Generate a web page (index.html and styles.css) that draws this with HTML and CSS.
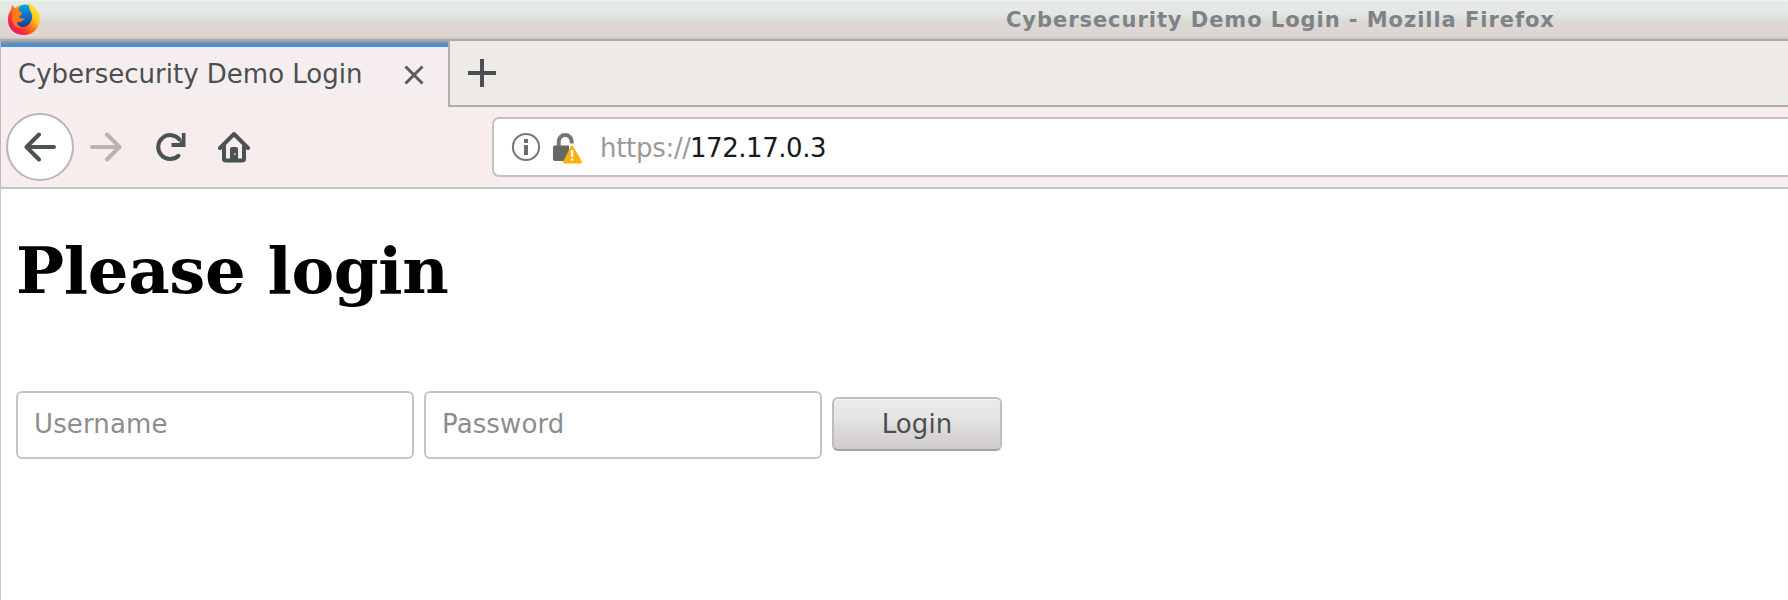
FILE: index.html
```html
<!DOCTYPE html>
<html lang="en">
<head>
<meta charset="utf-8">
<title>Cybersecurity Demo Login</title>
<link rel="stylesheet" href="styles.css">
</head>
<body>
<div class="window">
  <header class="titlebar">
    <svg class="logo" viewBox="0 0 34 34">
      <defs>
        <linearGradient id="flame" x1="0.9" y1="0.1" x2="0.1" y2="0.9">
          <stop offset="0" stop-color="#ffee3c"/><stop offset=".3" stop-color="#ffc522"/><stop offset=".55" stop-color="#ff6a1c"/><stop offset=".8" stop-color="#f9273f"/><stop offset="1" stop-color="#e5137c"/>
        </linearGradient>
        <linearGradient id="globe" x1="0" y1="0" x2="0" y2="1">
          <stop offset="0" stop-color="#08a6e8"/><stop offset="1" stop-color="#173a9b"/>
        </linearGradient>
      </defs>
      <path fill="url(#flame)" d="M5 3l3 3 5-3 8 0 1-3 3 4c6 3 8 8 8 13 0 9-7 16-16 16S1 27 1 18C1 13 2 10 4 8z"/>
      <path fill="url(#globe)" d="M13 4c4-2 7-2 9 0 0 5 4 7 3 12-1 6-5 9-10 9-4 0-6-2-5-5 4 1 5-1 8-3-2-1-5 0-7-2l4-4-4-3z"/>
      <path fill="#ff7a1a" d="M6 9c4-1 6 1 9 3l-3 3 3 3-5 2c0 3 3 5 6 5-7 3-11-3-11-8z"/>
    </svg>
    <div class="window-title">Cybersecurity Demo Login - Mozilla Firefox</div>
  </header>
  <div class="tabs">
    <div class="tab">
      <span class="tab-label">Cybersecurity Demo Login</span>
      <svg class="close" viewBox="0 0 20 20"><path d="M1.500 1.500l17 17M18.500 1.500l-17 17"/></svg>
    </div>
    <div class="strip"><svg class="plus" viewBox="0 0 28 28"><path d="M14 0v28M0 14h28"/></svg></div>
  </div>
  <nav class="toolbar">
    <div class="back"><svg viewBox="0 0 32 32"><path d="M30 16H3M15 3.500L2.500 16 15 28.500"/></svg></div>
    <svg class="forward" viewBox="0 0 32 32"><path d="M2 16h27M17 3.500L29.500 16 17 28.500"/></svg>
    <svg class="reload" viewBox="0 0 32 32"><path class="arc" d="M23.500 24.800A12 12 0 1 1 24.500 8.500"/><path class="head" d="M30.500 2v14H16.500v-4h7.500l2.800-3V2z"/></svg>
    <svg class="home" viewBox="0 0 32 32"><path class="house" d="M2 17L16 3l14 14M6 15v13q0 1.500 2 1.500h16q2 0 2-1.500V15"/><path class="door" d="M12 30V18q0-2 2-2h4q2 0 2 2v12z"/><circle class="knob" cx="16.800" cy="23" r="1"/></svg>
    <div class="urlbar">
      <svg class="info" viewBox="0 0 30 30"><circle cx="15" cy="15" r="13.100"/><path class="i" d="M13 7h4v4h-4zM13 13h4v10h-4z"/></svg>
      <svg class="lock" viewBox="0 0 30 32"><path class="shackle" d="M6.700 15V9.500a6.500 6.500 0 0 1 13 0V11.500"/><path class="case" d="M1 15q0-1.500 1.500-1.500H17V29H3q-2 0-2-2z"/><path class="warn" d="M18.700 14.500q1.300-2 2.600 0l8.500 15q.7 2-1.300 2H12.500q-2 0-1.300-2z"/><path class="mark" d="M18.900 18h2.400v7h-2.400zM18.900 26.600h2.400v2.200h-2.400z"/></svg>
      <span class="scheme">https://</span><span class="host">172.17.0.3</span>
    </div>
  </nav>
  <main class="page">
    <h1 class="heading">Please login</h1>
    <form class="login">
      <input class="field user" type="text" placeholder="Username">
      <input class="field pass" type="password" placeholder="Password">
      <button class="submit" type="button">Login</button>
    </form>
  </main>
</div>
</body>
</html>
```
FILE: styles.css
```css
* { box-sizing: border-box; }
body { margin: 0; background: #fff; font-family: "DejaVu Sans", sans-serif; font-size: 26px; color: #4a5052; overflow: hidden; }
svg { display: block; flex: none; }
.window { width: 1788px; height: 600px; display: flex; flex-direction: column; }
.titlebar { height: 41px; flex: none; display: flex; align-items: flex-start; border-bottom: 2px solid #aaa; background: linear-gradient(#f2f7f1 0, #e5ebe4 2px, #e5e6e6 14px, #dadad5 21px, #ded6d3 30px, #ded6d3 36px, #c8c6c5 39px); }
.logo { width: 34px; height: 34px; margin: 2px 0 0 7px; }
.window-title { margin: 6px 0 0 965px; font: bold 21px/28px "DejaVu Sans", sans-serif; letter-spacing: .95px; color: #808385; white-space: nowrap; }
.tabs { height: 66px; flex: none; display: flex; background: #eeebe6; }
.tab { width: 450px; height: 66px; display: flex; align-items: flex-start; background: #f6eeee; border-left: 1px solid #bbb; border-right: 2px solid #b0adab; box-shadow: inset 0 2px #939695, inset 0 6px #4a90d9; }
.tab-label { width: 343px; margin: 16px 0 0 17px; line-height: 34px; white-space: nowrap; }
.close { width: 20px; height: 20px; margin: 24px 0 0 43px; stroke: #575c5e; stroke-width: 3; fill: none; }
.strip { flex: 1; border-bottom: 2px solid #b0aba8; }
.plus { width: 28px; height: 28px; margin: 18px 0 0 18px; stroke: #4a5052; stroke-width: 4; }
.toolbar { height: 82px; flex: none; display: flex; align-items: flex-start; background: #f7eded; border-left: 1px solid #bbb; border-bottom: 2px solid #c5c2c3; }
.toolbar svg { fill: none; stroke: #4a5354; stroke-width: 4; }
.back { width: 68px; height: 68px; flex: none; margin: 6px 0 0 5px; border: 2px solid #bdb4b5; border-radius: 50%; background: #fff; display: flex; align-items: center; justify-content: center; }
.back svg { width: 32px; height: 32px; stroke-linecap: round; stroke-linejoin: round; }
.toolbar .forward { width: 32px; height: 32px; margin: 24px 0 0 16px; stroke: #b9b3b3; stroke-linecap: round; stroke-linejoin: round; }
.reload { width: 32px; height: 32px; margin: 24px 0 0 33px; }
.reload .arc { stroke-linecap: round; }
.reload .head { fill: #4a5354; stroke: none; }
.home { width: 32px; height: 32px; margin: 24px 0 0 31px; }
.home .house { stroke-linecap: round; stroke-linejoin: round; }
.home .door { fill: #4a5354; stroke: none; }
.home .knob { fill: #c9c9c9; stroke: none; }
.urlbar { flex: 1; height: 60px; margin: 10px 0 0 242px; display: flex; align-items: flex-start; border: 2px solid #c4c2c2; border-right: 0; border-radius: 7px 0 0 7px; background: #fff; }
.toolbar .info { width: 30px; height: 30px; margin: 13px 0 0 17px; stroke: #777; stroke-width: 2; }
.toolbar .info .i { fill: #6c6c6c; stroke: none; }
.lock { width: 30px; height: 32px; margin: 13px 0 0 11px; }
.lock .shackle { stroke: #747672; }
.lock .case { fill: #666864; stroke: none; }
.lock .warn { fill: #ffb10a; stroke: none; }
.lock .mark { fill: #fff; stroke: none; }
.scheme, .host { margin-top: 12px; line-height: 34px; white-space: nowrap; }
.scheme { width: 90px; margin-left: 18px; letter-spacing: -.3px; color: #999; }
.host { letter-spacing: -.45px; color: #17181a; }
.page { flex: 1; border-left: 1px solid #ccc; padding: 44px 0 0 15px; }
.heading { margin: 0; font: bold 64px/76px "DejaVu Serif", serif; letter-spacing: -.32px; color: #000; white-space: nowrap; }
.login { display: flex; align-items: flex-start; margin-top: 82px; }
.field { width: 398px; height: 68px; margin: 0 10px 0 0; padding: 0 16px 2px; border: 2px solid #c5c5c5; border-radius: 6px; background: #fff; font: inherit; letter-spacing: .12px; }
.field::placeholder { color: #8d8d8d; opacity: 1; }
.submit { width: 170px; height: 54px; margin: 6px 0 0; padding: 0; border: 2px solid #bfbebc; border-bottom-color: #a6a39d; border-radius: 6px; background: linear-gradient(#ebebeb, #e4e4e4 45%, #dedcd9 55%, #cfcccc); box-shadow: inset 0 1px #f7f7f7; font: inherit; letter-spacing: .12px; color: #4a5052; }
```
